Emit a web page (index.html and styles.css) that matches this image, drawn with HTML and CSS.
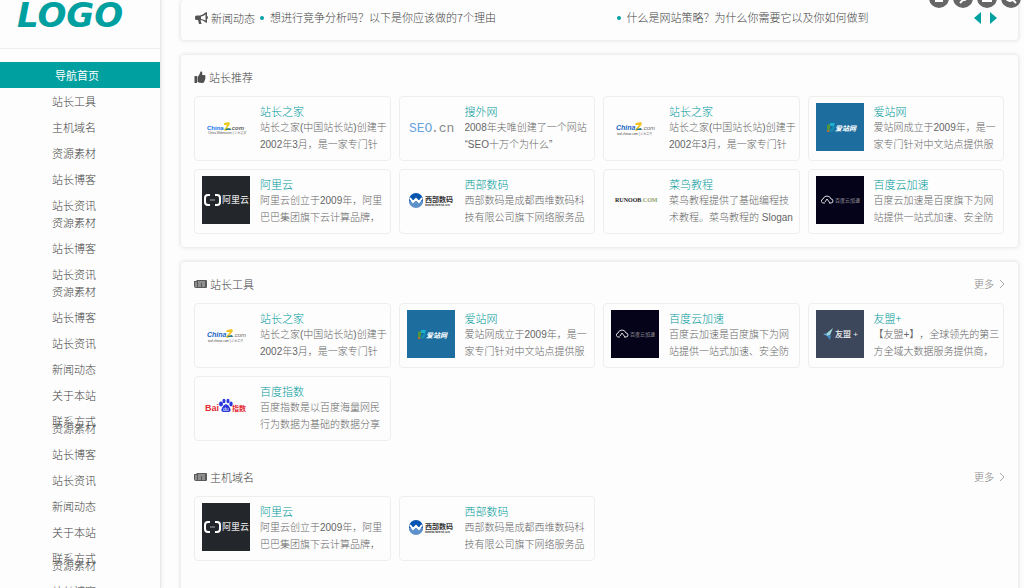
FILE: index.html
```html
<!DOCTYPE html>
<html lang="zh-CN">
<head>
<meta charset="utf-8">
<title>导航首页</title>
<link rel="stylesheet" href="styles.css">
</head>
<body>
<svg class="defs" aria-hidden="true">
  <symbol id="chinaz" viewBox="0 0 48 48">
    <text x="5" y="27" class="lt" font-size="7" font-weight="700" font-style="italic" fill="#1a66c2">China</text>
    <path d="M25 20l5-1 1 2-4 5 3 0-5 2-1-1 4-5-4 0z" fill="#f2c322"/><path d="M25 26l5-1 1 2-5 0z" fill="#267a88"/>
    <text x="31" y="27" class="lt" font-size="6" font-style="italic" fill="#666">.com</text>
    <text x="6" y="32" class="lt" font-size="3" fill="#444">tool.chinaz.com | 站长工具</text>
  </symbol>
  <symbol id="chinaz-bold" viewBox="0 0 48 48">
    <text x="5" y="27" class="lt" font-size="6" font-weight="700" fill="#1471ee">China</text>
    <path d="M22 20l5-1 1 2-3 4 3 1-5 2-1-1 3-5-3 0z" fill="#e6cc20"/><path d="M23 26l5-1 1 2-5 0z" fill="#267a88"/>
    <text x="28" y="27" class="lt" font-size="6" font-weight="700" font-style="italic" fill="#666">.com</text>
    <text x="6" y="31" class="lt" font-size="3" fill="#555">China Webmaster | 站长之家</text>
  </symbol>
  <symbol id="seo" viewBox="0 0 48 48">
    <text x="2" y="29" class="mono" font-size="13" fill="#67a3dd">SEO</text>
    <text x="24" y="29" class="mono" font-size="13" fill="#888">.cn</text>
  </symbol>
  <symbol id="aizhan" viewBox="0 0 48 48">
    <rect width="48" height="48" fill="#1d6d9f"/>
    <path d="M11 22l3-1v4l-1 4-2-1z" fill="#52963c"/><path d="M14 20h5l-1 3h-4z" fill="#19b1cf"/><path d="M17 23h2l-2 5-4 1z" fill="#168fb6"/><path d="M11 27l3 1-1 1h-2z" fill="#c06b35"/>
    <text x="19" y="28" class="lt" font-size="7" font-weight="700" font-style="italic" fill="#fff">爱站网</text>
  </symbol>
  <symbol id="aliyun" viewBox="0 0 48 48">
    <rect width="48" height="48" fill="#23272c"/>
    <path d="M8 19H6q-3 0-3 3v4q0 3 3 3h2M13 19h2q3 0 3 3v4q0 3-3 3h-2" fill="none" stroke="#fff" stroke-width="2"/><path d="M8 24h5" stroke="#aaa"/>
    <text x="20" y="27" class="lt" font-size="9" font-weight="500" fill="#ddd">阿里云</text>
  </symbol>
  <symbol id="west" viewBox="0 0 48 48">
    <circle cx="9" cy="24" r="7" fill="#0755ae"/><path d="M2 25h14a7 7 0 0 1-14 0" fill="#5d91ca"/><path d="M3 22l3 4 3-3 3 3 3-4" fill="none" stroke="#fff" stroke-width="2"/>
    <text x="18" y="26" class="lt" font-size="7" font-weight="700" fill="#333">西部数码</text>
    <text x="18" y="30" class="lt" font-size="4" font-weight="700" fill="#444">www.west.cn</text>
  </symbol>
  <symbol id="runoob" viewBox="0 0 48 48">
    <text x="4" y="26" class="serif" font-size="6" font-weight="700" fill="#222">RUNOOB<tspan fill="#8da06c">.COM</tspan></text>
  </symbol>
  <symbol id="yunjiasu" viewBox="0 0 48 48">
    <rect width="48" height="48" fill="#04031a"/>
    <path d="M9 27H8a2 2 0 0 1-1-4q1-3 4-3t4 3a2 2 0 0 1 0 4h-2M9 26l2-3 3 4" fill="none" stroke="#ddd" stroke-width="1"/>
    <text x="19" y="26" class="lt" font-size="5" fill="#ccc">百度云加速</text>
  </symbol>
  <symbol id="umeng" viewBox="0 0 48 48">
    <rect width="48" height="48" fill="#3c475b"/>
    <path d="M7 24l5-1-1 3z" fill="#62a8dd"/><path d="M11 23l6-5-3 7-3 1z" fill="#9edadb"/><path d="M11 26l4-1-1 5z" fill="#438bca"/>
    <text x="19" y="27" class="lt" font-size="8" font-weight="500" fill="#eee">友盟 +</text>
  </symbol>
  <symbol id="baidu" viewBox="0 0 48 48">
    <text x="3" y="28" class="lt" font-size="9" font-weight="700" fill="#e22b32">Bai</text>
    <g fill="#2a37dc"><ellipse cx="19" cy="21" rx="2" ry="2.4"/><ellipse cx="22" cy="18" rx="1.5" ry="2.2"/><ellipse cx="26" cy="18" rx="1.5" ry="2.2"/><ellipse cx="29" cy="21" rx="1.7" ry="2.4"/><path d="M24 21q3 1 4 4 2 4-2 4h-4q-4 0-2-4 1-3 4-4"/></g>
    <text x="21" y="28" class="lt" font-size="5" fill="#fff">du</text>
    <text x="30" y="28" class="lt" font-size="7" font-weight="700" fill="#e22b32">指数</text>
  </symbol>
  <symbol id="news" viewBox="0 0 13 10">
    <path d="M3 1h9a1 1 0 0 1 1 1v6a1 1 0 0 1-1 1H2a2 2 0 0 1-2-2V2h2z" fill="#5a5a5a"/><path d="M4 3h7M4 5h3M8 5h3M4 7h3M8 7h3M2 3v5" stroke="#ddd" stroke-width=".8"/>
  </symbol>
</svg>

<div class="layout">
  <aside class="sidebar">
    <a class="brand" href="#">LOGO</a>
    <nav>
      <ul class="menu solid">
        <li><a class="active" href="#">导航首页</a></li>
        <li><a href="#">站长工具</a></li>
        <li><a href="#">主机域名</a></li>
        <li><a href="#">资源素材</a></li>
        <li><a href="#">站长博客</a></li>
        <li><a href="#">站长资讯</a></li>
      </ul>
      <ul class="menu solid tucked">
        <li><a href="#">资源素材</a></li>
        <li><a href="#">站长博客</a></li>
        <li><a href="#">站长资讯</a></li>
      </ul>
      <ul class="menu tucked">
        <li><a href="#">资源素材</a></li>
        <li><a href="#">站长博客</a></li>
        <li><a href="#">站长资讯</a></li>
        <li><a href="#">新闻动态</a></li>
        <li><a href="#">关于本站</a></li>
        <li><a href="#">联系方式</a></li>
      </ul>
      <ul class="menu overlapped">
        <li><a href="#">资源素材</a></li>
        <li><a href="#">站长博客</a></li>
        <li><a href="#">站长资讯</a></li>
        <li><a href="#">新闻动态</a></li>
        <li><a href="#">关于本站</a></li>
        <li><a href="#">联系方式</a></li>
      </ul>
      <ul class="menu overlapped">
        <li><a href="#">资源素材</a></li>
        <li><a href="#">站长博客</a></li>
      </ul>
    </nav>
  </aside>

  <main class="main">
    <section class="panel ticker">
      <svg class="icon" viewBox="0 0 13 12" aria-hidden="true"><path d="M12 0v11L10 10Q8 8 5.500 8L6.500 12H4L3 8H1.500Q0 8 0 6.500V5q0-1.500 1.500-1.500H5Q8 3 10 .8zM10.500 2.500Q8 4.300 6 4.600v2.300Q8 7.200 10.500 8.500z" fill="#555" fill-rule="evenodd"/><path d="M12 4q1 .2 1 1.400T12 7z" fill="#555"/></svg>
      <h2>新闻动态</h2>
      <ul class="headlines">
        <li><a href="#">想进行竞争分析吗？以下是你应该做的7个理由</a></li>
        <li><a href="#">什么是网站策略？为什么你需要它以及你如何做到</a></li>
      </ul>
      <div class="arrows">
        <button type="button" aria-label="上一条"><svg viewBox="0 0 7 12"><path d="M7 0v12L0 6z"/></svg></button>
        <button type="button" aria-label="下一条"><svg viewBox="0 0 7 12"><path d="M0 0v12l7-6z"/></svg></button>
      </div>
    </section>

    <section class="panel">
      <header class="head">
        <svg class="icon thumbs-up" viewBox="0 0 11 12" aria-hidden="true"><path d="M0 5h2.500v7H0zM3 6Q5 4 5.500 2 6 0 7 .4q1.500.6.6 3.600H10q1.500.3.800 2 .5 1-.2 2 .2 1-.6 1.700Q10 12 8 12 5 12 3 11z" fill="#505050"/></svg>
        <h2>站长推荐</h2>
      </header>
      <div class="grid">
        <a class="card" href="#"><svg class="thumb"><use href="#chinaz-bold"/></svg><div class="info"><h3>站长之家</h3><p>站长之家(中国站长站)创建于2002年3月，是一家专门针</p></div></a>
        <a class="card" href="#"><svg class="thumb"><use href="#seo"/></svg><div class="info"><h3>搜外网</h3><p>2008年夫唯创建了一个网站“SEO十万个为什么”</p></div></a>
        <a class="card" href="#"><svg class="thumb"><use href="#chinaz"/></svg><div class="info"><h3>站长之家</h3><p>站长之家(中国站长站)创建于2002年3月，是一家专门针</p></div></a>
        <a class="card" href="#"><svg class="thumb"><use href="#aizhan"/></svg><div class="info"><h3>爱站网</h3><p>爱站网成立于2009年，是一家专门针对中文站点提供服</p></div></a>
        <a class="card" href="#"><svg class="thumb"><use href="#aliyun"/></svg><div class="info"><h3>阿里云</h3><p>阿里云创立于2009年，阿里巴巴集团旗下云计算品牌，</p></div></a>
        <a class="card" href="#"><svg class="thumb"><use href="#west"/></svg><div class="info"><h3>西部数码</h3><p>西部数码是成都西维数码科技有限公司旗下网络服务品</p></div></a>
        <a class="card" href="#"><svg class="thumb"><use href="#runoob"/></svg><div class="info"><h3>菜鸟教程</h3><p>菜鸟教程提供了基础编程技术教程。菜鸟教程的 Slogan</p></div></a>
        <a class="card" href="#"><svg class="thumb"><use href="#yunjiasu"/></svg><div class="info"><h3>百度云加速</h3><p>百度云加速是百度旗下为网站提供一站式加速、安全防</p></div></a>
      </div>
    </section>

    <section class="panel">
      <header class="head">
        <svg class="icon" aria-hidden="true"><use href="#news"/></svg>
        <h2>站长工具</h2>
        <a class="more" href="#">更多<svg viewBox="0 0 4 8"><path d="M0 0l4 4-4 4"/></svg></a>
      </header>
      <div class="grid">
        <a class="card" href="#"><svg class="thumb"><use href="#chinaz"/></svg><div class="info"><h3>站长之家</h3><p>站长之家(中国站长站)创建于2002年3月，是一家专门针</p></div></a>
        <a class="card" href="#"><svg class="thumb"><use href="#aizhan"/></svg><div class="info"><h3>爱站网</h3><p>爱站网成立于2009年，是一家专门针对中文站点提供服</p></div></a>
        <a class="card" href="#"><svg class="thumb"><use href="#yunjiasu"/></svg><div class="info"><h3>百度云加速</h3><p>百度云加速是百度旗下为网站提供一站式加速、安全防</p></div></a>
        <a class="card" href="#"><svg class="thumb"><use href="#umeng"/></svg><div class="info"><h3>友盟+</h3><p>【友盟+】，全球领先的第三方全域大数据服务提供商，</p></div></a>
        <a class="card" href="#"><svg class="thumb"><use href="#baidu"/></svg><div class="info"><h3>百度指数</h3><p>百度指数是以百度海量网民行为数据为基础的数据分享</p></div></a>
      </div>
      <header class="head next">
        <svg class="icon" aria-hidden="true"><use href="#news"/></svg>
        <h2>主机域名</h2>
        <a class="more" href="#">更多<svg viewBox="0 0 4 8"><path d="M0 0l4 4-4 4"/></svg></a>
      </header>
      <div class="grid">
        <a class="card" href="#"><svg class="thumb"><use href="#aliyun"/></svg><div class="info"><h3>阿里云</h3><p>阿里云创立于2009年，阿里巴巴集团旗下云计算品牌，</p></div></a>
        <a class="card" href="#"><svg class="thumb"><use href="#west"/></svg><div class="info"><h3>西部数码</h3><p>西部数码是成都西维数码科技有限公司旗下网络服务品</p></div></a>
      </div>
    </section>
  </main>
</div>

<div class="tools">
  <button type="button" aria-label="列表"><svg viewBox="0 0 20 20"><path d="M6 13h8"/></svg></button>
  <button type="button" aria-label="编辑"><svg viewBox="0 0 20 20"><path d="M7 15l4-4 2 1"/></svg></button>
  <button type="button" aria-label="窗口"><svg viewBox="0 0 20 20"><path d="M6 10v3h8v-3"/></svg></button>
  <button type="button" aria-label="搜索"><svg viewBox="0 0 20 20"><circle cx="9" cy="9" r="4"/><path d="M12 12l3 3"/></svg></button>
</div>
</body>
</html>
```
FILE: styles.css
```css
* { box-sizing: border-box; }
body {
  margin: 0;
  height: 100vh;
  overflow: hidden;
  background: #fdfdfd;
  color: #444;
  font: 300 11px/18px "Noto Sans CJK SC", sans-serif;
  text-spacing-trim: space-all;
}
a { color: inherit; text-decoration: none; }
ul { list-style: none; margin: 0; padding: 0; }
h2, h3, p { margin: 0; font-size: 11px; font-weight: inherit; }
button { border: 0; padding: 0; background: none; }
svg { display: block; }
.defs { display: none; }
.lt { font-family: "Liberation Sans", "Noto Sans CJK SC", sans-serif; }
.mono { font-family: "Liberation Mono", monospace; }
.serif { font-family: "Liberation Serif", serif; }

.layout { display: flex; height: 100vh; }

.sidebar {
  flex: 0 0 161px;
  border-right: 1px solid #e8e8e8;
  box-shadow: 1px 0 3px #ececec;
}
.brand {
  display: block;
  height: 49px;
  margin-bottom: 13px;
  padding-left: 17px;
  border-bottom: 1px solid #f0f0f0;
  color: #00a0a0;
  font: italic 700 34px/31px "DejaVu Sans", sans-serif;
}
.menu a { display: block; padding-left: 52px; line-height: 26px; }
.menu .active { padding-left: 55px; background: #00a0a0; color: #fff; font-weight: 400; }
.solid { position: relative; z-index: 1; }
.solid li { background: #fdfdfd; }
.solid:first-child { z-index: 2; }
.tucked { margin-top: -9px; }
.overlapped { margin-top: -19px; }

.main { flex: 1; min-width: 0; padding: 0 5px 0 19px; }
.panel {
  margin-bottom: 13px;
  padding: 0 14px 13px 13px;
  border: 1px solid #eee;
  border-radius: 4px;
  box-shadow: 0 0 3px 1px #efefef;
}
.panel:last-child { padding-bottom: 60px; }
.icon { width: 13px; height: 12px; flex: none; }
.thumbs-up { width: 12px; }

.ticker {
  display: flex;
  align-items: center;
  gap: 3px;
  padding: 0 21px 5px 14px;
  border-top: 0;
}
.headlines {
  flex: 1;
  display: grid;
  grid-template-columns: 1fr 1fr;
  line-height: 35px;
}
.headlines li { display: flex; align-items: center; gap: 6px; padding-left: 2px; white-space: nowrap; }
.headlines li::before { content: ""; width: 4px; height: 4px; border-radius: 50%; background: #00a0a0; }
.arrows { display: flex; gap: 9px; }
.arrows svg { width: 7px; height: 12px; fill: #00a0a0; }

.head { display: flex; align-items: center; gap: 3px; padding: 13px 0 10px; }
.head.next { padding-top: 27px; }
.more { display: flex; align-items: center; gap: 6px; margin-left: auto; color: #888; font-size: 10px; }
.more svg { width: 4px; height: 8px; overflow: visible; fill: none; stroke: #aaa; }

.grid { display: grid; grid-template-columns: repeat(4, minmax(0, 1fr)); gap: 8px; }
.card {
  display: flex;
  gap: 10px;
  padding: 6px 1px 7px 7px;
  border: 1px solid #eee;
  border-radius: 4px;
}
.thumb { flex: none; width: 48px; height: 48px; }
.info { flex: 1; min-width: 0; }
.info h3 { color: #009a9a; line-height: 16px; }
.info p {
  height: 34px;
  overflow: hidden;
  color: #666;
  font: 300 10px/17px "Liberation Sans", "Noto Sans CJK SC", sans-serif;
}

.tools { position: absolute; top: -12px; right: 3px; display: flex; gap: 4px; }
.tools button { width: 20px; height: 20px; border-radius: 50%; background: #666; }
.tools svg { fill: none; stroke: #fff; stroke-width: 2; }
```
